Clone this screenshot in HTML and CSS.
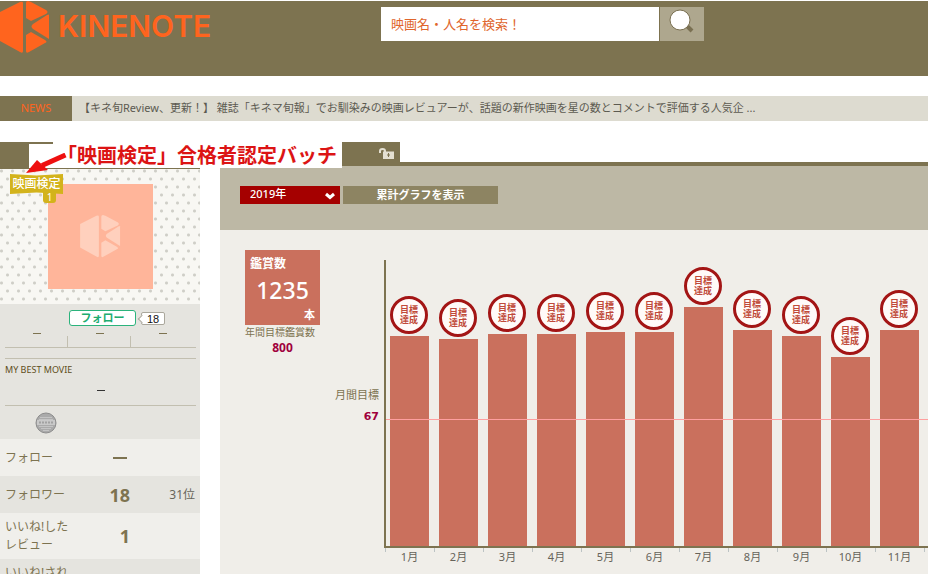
FILE: index.html
```
<!DOCTYPE html>
<html lang="ja">
<head>
<meta charset="utf-8">
<title>KINENOTE</title>
<link rel="stylesheet" href="styles.css">
</head>
<body>
<svg class="defs" aria-hidden="true">
  <symbol id="mark" viewBox="0 0 50 54">
    <path d="M0 11 20 1Q23 0 23 2V50Q23 53 20 51L0 40Z"/>
    <path d="M26 2Q26 0 28 0L31 1 46 9Q49 11 46 13L31 20 26 17Z"/>
    <path d="M49 14V38L33 28Q30 25.500 33 23L47 14Q49 13 49 14Z"/>
    <path d="M26 34 31 31 45 39Q48 41 45 42L29 51Q26 53 26 50Z"/>
  </symbol>
</svg>
<div class="page">
  <header class="header">
    <a class="brand" href="#">
      <svg class="brand-mark"><use href="#mark"/></svg>
      <span>KINENOTE</span>
    </a>
    <form class="search">
      <input type="text" aria-label="検索" placeholder="映画名・人名を検索！">
      <button type="button" aria-label="検索する">
        <svg width="26" height="26" viewBox="0 0 26 26"><path d="M17 15 24 22" stroke="#7a7052" stroke-width="4"/><circle cx="12" cy="11" r="10" fill="#fff" stroke="#7a7052"/></svg>
      </button>
    </form>
  </header>

  <section class="news">
    <h2>NEWS</h2>
    <a href="#">【キネ旬Review、更新！】 雑誌「キネマ旬報」でお馴染みの映画レビュアーが、話題の新作映画を星の数とコメントで評価する人気企 ...</a>
  </section>

  <nav class="tabs">
    <span class="tab tab-first"></span>
    <span class="tab tab-current"></span>
    <span class="tab tab-lock">
      <svg width="16" height="12" viewBox="0 0 16 12"><path d="M1 5V3Q1 1 3.500 1T6 3V5" fill="none" stroke="#e4e0d2" stroke-width="2"/><path d="M4 3.500H15V11H4Z" fill="#e4e0d2"/><path d="M9.500 5V9M8 7H11" stroke="#7d7350"/></svg>
    </span>
    <p class="note">「映画検定」合格者認定バッチ</p>
    <svg class="arrow" width="42" height="22" viewBox="0 0 42 22"><path d="M39.500 2 16 12.500" stroke="#ee1010" stroke-width="5"/><path d="M0 20 11 7 22 17Z" fill="#ee1010"/></svg>
  </nav>

  <div class="layout">
    <aside class="sidebar">
      <div class="portrait">
        <div class="avatar"><svg><use href="#mark"/></svg></div>
        <div class="badge">
          <span class="badge-name">映画検定</span>
          <span class="badge-grade">1</span>
        </div>
      </div>
      <div class="profile">
        <div class="follow">
          <button type="button">フォロー</button>
          <span class="count">18</span>
        </div>
        <div class="stats"><span><i></i></span><span><i></i></span><span><i></i></span></div>
        <div class="best">
          <h3>MY BEST MOVIE</h3>
          <i></i>
        </div>
        <svg class="medal" width="22" height="22" viewBox="0 0 22 22"><circle cx="11" cy="11" r="10" fill="#aaa" stroke="#8d8d8d"/><path d="M5 5.500H17M4 7.500H18M4 14.500H18M6 16.500H16M8 18.500H14" stroke="#c4c4c4"/><path d="M2 8H20V13H2Z" fill="#c9c9c9"/><path d="M4 10.500H18" stroke="#a2a2a2" stroke-width="2" stroke-dasharray="2 1"/></svg>
      </div>
      <table class="totals">
        <tr><th scope="row">フォロー</th><td class="total"><i></i></td><td class="rank"></td></tr>
        <tr><th scope="row">フォロワー</th><td class="total">18</td><td class="rank">31位</td></tr>
        <tr><th scope="row">いいね!した<br>レビュー</th><td class="total">1</td><td class="rank"></td></tr>
        <tr class="tall"><th scope="row">いいね!され</th><td class="total"></td><td class="rank"></td></tr>
      </table>
    </aside>

    <main class="main">
      <div class="toolbar">
        <label class="year">
          <select aria-label="年"><option>2019年</option></select>
          <svg width="10" height="8" viewBox="0 0 10 8"><path d="M1 2 5 5.500 9 2" fill="none" stroke="#fff" stroke-width="3"/></svg>
        </label>
        <button type="button">累計グラフを表示</button>
      </div>
      <div class="chart">
        <div class="summary">
          <div class="seen"><h3>鑑賞数</h3><strong>1235</strong><span>本</span></div>
          <p>年間目標鑑賞数</p>
          <b>800</b>
        </div>
        <div class="goal"><p>月間目標</p><b>67</b></div>
        <div class="plot">
          <div class="bars">
            <div class="col"><span class="stamp">目標<br>達成</span><div class="bar" style="height:210px"></div></div>
            <div class="col"><span class="stamp">目標<br>達成</span><div class="bar" style="height:207px"></div></div>
            <div class="col"><span class="stamp">目標<br>達成</span><div class="bar" style="height:212px"></div></div>
            <div class="col"><span class="stamp">目標<br>達成</span><div class="bar" style="height:212px"></div></div>
            <div class="col"><span class="stamp">目標<br>達成</span><div class="bar" style="height:214px"></div></div>
            <div class="col"><span class="stamp">目標<br>達成</span><div class="bar" style="height:214px"></div></div>
            <div class="col"><span class="stamp">目標<br>達成</span><div class="bar" style="height:239px"></div></div>
            <div class="col"><span class="stamp">目標<br>達成</span><div class="bar" style="height:216px"></div></div>
            <div class="col"><span class="stamp">目標<br>達成</span><div class="bar" style="height:210px"></div></div>
            <div class="col"><span class="stamp">目標<br>達成</span><div class="bar" style="height:189px"></div></div>
            <div class="col"><span class="stamp">目標<br>達成</span><div class="bar" style="height:216px"></div></div>
            <div class="goal-line"></div>
          </div>
          <div class="months"><span>1月</span><span>2月</span><span>3月</span><span>4月</span><span>5月</span><span>6月</span><span>7月</span><span>8月</span><span>9月</span><span>10月</span><span>11月</span><span></span></div>
        </div>
      </div>
    </main>
  </div>
</div>
</body>
</html>
```
FILE: styles.css
```
* { box-sizing: border-box; }
body, h2, h3, p { margin: 0; font-weight: normal; }
body {
  background: #fff;
  color: #7d7350;
  font: 12px/18px "Noto Sans", "Noto Sans CJK JP", sans-serif;
}
svg { display: block; }
i { display: block; }
a { text-decoration: none; }
button, input, select { border: 0; border-radius: 0; padding: 0; font: inherit; }
.defs { position: absolute; width: 0; height: 0; }
.page { height: 100vh; overflow: hidden; padding-top: 1px; }

.header { display: flex; height: 75px; background: #7d7350; }
.brand {
  display: flex;
  gap: 8px;
  width: 381px;
  color: #ff641e;
  font: 600 30px/50px Inter, sans-serif;
}
.brand-mark { width: 50px; height: 54px; fill: #ff641e; }
.search { display: flex; gap: 1px; height: 34px; margin-top: 6px; }
.search input { width: 278px; padding: 0 10px; background: #fff; color: #e0652c; font-size: 13px; }
.search input::placeholder { color: #e0652c; opacity: 1; }
.search button { width: 44px; padding: 0 8px 4px; background: #aea78e; }

.news { display: flex; height: 25px; margin: 20px 0 21px; background: #dddbd0; line-height: 24px; }
.news h2 { flex: none; width: 72px; background: #7d7350; color: #ff641e; font-size: 11px; text-align: center; }
.news a { padding-left: 7px; color: #5c5a50; font-size: 11px; white-space: nowrap; }

.tabs { position: relative; z-index: 1; display: flex; height: 24px; border-bottom: 4px solid #7d7350; }
.tab { height: 24px; background: #7d7350; }
.tab-first { width: 29px; height: 26px; }
.tab-current { width: 24px; height: 26px; border-top: 2px solid #7d7350; background: #fff; }
.tab-lock { width: 58px; margin-left: 289px; padding: 6px 0 0 37px; }
.note {
  position: absolute;
  left: 53px;
  top: 0;
  width: 289px;
  padding-left: 4px;
  background: #fff;
  color: #dc1414;
  font: bold 20px/26px "Noto Sans CJK JP", sans-serif;
  white-space: nowrap;
}
.arrow { position: absolute; left: 26px; top: 11px; }

.layout { display: flex; gap: 20px; align-items: flex-start; }
.sidebar { flex: none; width: 200px; margin-top: 2px; }
.portrait {
  position: relative;
  height: 136px;
  padding-top: 15px;
  border-top: 1px solid #7d7350;
  background: radial-gradient(circle, #cfcec7 1px, transparent 2px) -4px -6px / 11px 16px,
    radial-gradient(circle, #cfcec7 1px, transparent 2px) 2px 2px / 11px 16px, #f8f7f3;
}
.avatar { width: 105px; height: 105px; margin-left: 48px; padding: 31px 32px; background: #ffb59a; }
.avatar svg { width: 41px; height: 44px; fill: #ffd0bd; }
.badge { position: absolute; left: 10px; top: 5px; width: 53px; color: #fff; text-align: center; }
.badge-name {
  display: block;
  height: 20px;
  background: #d3b31c;
  clip-path: polygon(0 0, 50% 8%, 100% 0, 100% 100%, 50% 92%, 0 100%);
  font-weight: 500;
  line-height: 19px;
}
.badge-grade {
  position: absolute;
  left: 33px;
  top: 18px;
  width: 13px;
  height: 11px;
  border-radius: 0 0 3px 3px;
  background: #d3b31c;
  font-size: 10px;
  line-height: 11px;
}

.profile { height: 135px; padding: 6px 4px 0 5px; background: #e5e4df; }
.follow { display: flex; align-items: center; gap: 5px; height: 16px; margin-left: 64px; }
.follow button {
  width: 67px;
  height: 16px;
  border: 1px solid #2bb37c;
  border-radius: 3px;
  background: #fff;
  color: #20ac70;
  font-size: 11px;
  font-weight: bold;
  line-height: 14px;
}
.count {
  position: relative;
  width: 24px;
  height: 13px;
  border: 1px solid #aaa79c;
  border-radius: 2px;
  background: #fff;
  color: #111;
  font: 11px/12px "Liberation Sans", sans-serif;
  text-align: center;
}
.count::before {
  content: "";
  position: absolute;
  left: -3px;
  top: 3px;
  width: 5px;
  height: 5px;
  border: solid #aaa79c;
  border-width: 0 0 1px 1px;
  background: #fff;
  transform: rotate(45deg);
}
.stats { display: grid; grid-template-columns: repeat(3, 63px); height: 22px; border-bottom: 1px solid #c2bfb0; }
.stats span { padding-top: 7px; background: linear-gradient(#c2bfb0, #c2bfb0) right bottom / 1px 11px no-repeat; }
.stats span:last-child { background: none; }
.stats i { width: 8px; height: 1px; margin: 0 auto; background: #7d7350; }
.best { height: 48px; margin-top: 10px; border: solid #c2bfb0; border-width: 1px 0; }
.best h3 { color: #5e4d20; font-size: 9px; line-height: 22px; }
.best i { width: 8px; height: 1px; margin: 9px auto 0; background: #333; }
.medal { margin: 6px 0 0 30px; }

.totals { width: 100%; border-collapse: collapse; table-layout: fixed; }
.totals tr { height: 37px; background: #f0efeb; }
.totals tr:nth-child(even) { background: #e5e4df; }
.totals .tall { height: 46px; vertical-align: top; }
.totals th, .totals td { padding: 5px 0; font-weight: normal; text-align: left; }
.totals th { width: 90px; padding-left: 5px; }
.totals .total { width: 40px; font-size: 18px; font-weight: bold; text-align: right; }
.totals .rank { padding-right: 5px; color: #67645a; text-align: right; }
.total i { width: 14px; height: 2px; margin-left: 23px; background: #7d7350; }

.main { flex: 1; min-width: 0; overflow: hidden; background: #f0eee9; }
.toolbar { display: flex; gap: 3px; height: 64px; padding: 20px; background: #bdb8a5; }
.year { position: relative; width: 100px; height: 18px; }
.year select {
  display: block;
  width: 100%;
  height: 18px;
  padding: 0 10px 3px;
  appearance: none;
  background: #a50000;
  color: #fff;
  font-size: 11px;
  font-weight: 500;
  line-height: 15px;
}
.year svg { position: absolute; right: 5px; top: 6px; }
.toolbar button { width: 155px; height: 18px; background: #8d8462; color: #fff; font-size: 11px; font-weight: bold; line-height: 18px; }

.chart { display: flex; padding: 20px 0 100px 25px; }
.summary { flex: none; width: 75px; text-align: center; }
.seen { height: 75px; padding: 5px; background: #ca705d; color: #fff; text-align: left; }
.seen h3 { font-size: 12px; font-weight: bold; line-height: 18px; }
.seen strong { display: block; font-size: 23px; font-weight: 500; line-height: 34px; text-align: center; }
.seen span { display: block; font-size: 11px; font-weight: bold; line-height: 16px; text-align: right; }
.summary p { width: 70px; font-size: 10px; line-height: 14px; }
.summary b, .goal b { color: #a0003c; }
.goal { flex: none; width: 64px; padding: 136px 5px 0 0; text-align: right; }
.goal p { font-size: 11px; }
.goal b { display: block; font: bold 11px/26px "DejaVu Sans", sans-serif; }
.plot { flex: 1; min-width: 0; margin-top: 10px; }
.bars, .months { display: grid; grid-template-columns: repeat(12, 49px); }
.bars { position: relative; height: 288px; border: solid #7d7350; border-width: 0 0 2px 2px; }
.col { display: flex; flex-direction: column; justify-content: flex-end; padding: 0 6px 0 4px; }
.stamp {
  flex: none;
  width: 38px;
  height: 38px;
  margin-bottom: 2px;
  padding-top: 6px;
  border: 3px solid #a31515;
  border-radius: 50%;
  background: #fffaf8;
  color: #c04a3a;
  font: bold 9px/10px "Noto Sans CJK JP", sans-serif;
  text-align: center;
}
.bar { background: #ca705d; }
.goal-line { position: absolute; left: 0; right: 0; bottom: 126px; height: 1px; background: #ff9f9f; }
.months { padding-left: 1px; color: #66635a; font-size: 11px; text-align: center; }
.months span { height: 18px; background: linear-gradient(#bcc3c4, #bcc3c4) left top / 1px 4px no-repeat; }
```
